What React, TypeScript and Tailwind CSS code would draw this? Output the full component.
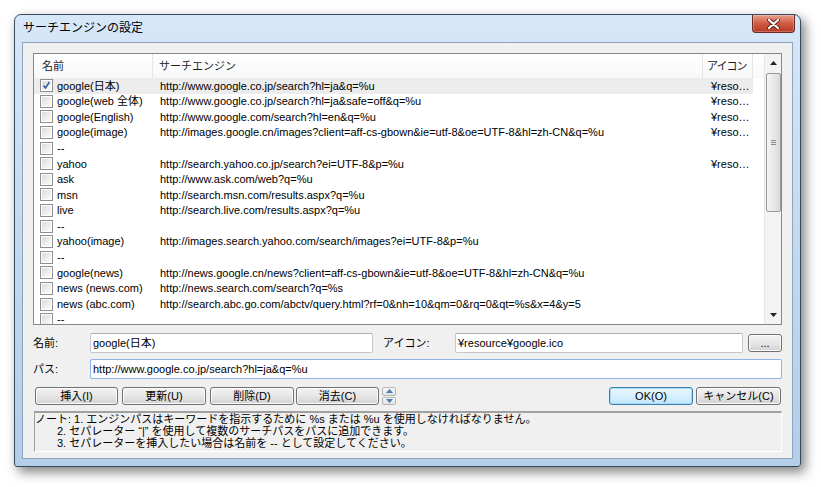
import React from "react";

const rows = [
  { name: "google(日本)", url: "http://www.google.co.jp/search?hl=ja&q=%u", icon: "¥reso…", checked: true },
  { name: "google(web 全体)", url: "http://www.google.co.jp/search?hl=ja&safe=off&q=%u", icon: "¥reso…" },
  { name: "google(English)", url: "http://www.google.com/search?hl=en&q=%u", icon: "¥reso…" },
  { name: "google(image)", url: "http://images.google.cn/images?client=aff-cs-gbown&ie=utf-8&oe=UTF-8&hl=zh-CN&q=%u", icon: "¥reso…" },
  { name: "--", url: "", icon: "" },
  { name: "yahoo", url: "http://search.yahoo.co.jp/search?ei=UTF-8&p=%u", icon: "¥reso…" },
  { name: "ask", url: "http://www.ask.com/web?q=%u", icon: "" },
  { name: "msn", url: "http://search.msn.com/results.aspx?q=%u", icon: "" },
  { name: "live", url: "http://search.live.com/results.aspx?q=%u", icon: "" },
  { name: "--", url: "", icon: "" },
  { name: "yahoo(image)", url: "http://images.search.yahoo.com/search/images?ei=UTF-8&p=%u", icon: "" },
  { name: "--", url: "", icon: "" },
  { name: "google(news)", url: "http://news.google.cn/news?client=aff-cs-gbown&ie=utf-8&oe=UTF-8&hl=zh-CN&q=%u", icon: "" },
  { name: "news (news.com)", url: "http://news.search.com/search?q=%s", icon: "" },
  { name: "news (abc.com)", url: "http://search.abc.go.com/abctv/query.html?rf=0&nh=10&qm=0&rq=0&qt=%s&x=4&y=5", icon: "" },
  { name: "--", url: "", icon: "" },
];

function CheckBox({ checked }: { checked?: boolean }) {
  return (
    <div className="w-[13px] h-[13px] shrink-0 border border-[#8e8f8f] bg-white p-px">
      <div className="relative w-full h-full bg-gradient-to-br from-[#dcdcdc] to-[#fbfbfb]">
        {checked && (
          <svg className="absolute inset-0" width="9" height="9" viewBox="0 0 9 9">
            <path d="M1.5 4.5 L3.5 7 L7.5 1" fill="none" stroke="#3c58a8" strokeWidth="1.6" />
          </svg>
        )}
      </div>
    </div>
  );
}

function Arrow({ up, color = "#222" }: { up?: boolean; color?: string }) {
  return (
    <svg width="7" height="4" viewBox="0 0 7 4">
      <path d={up ? "M0 4 L3.5 0 L7 4 Z" : "M0 0 L3.5 4 L7 0 Z"} fill={color} />
    </svg>
  );
}

function Btn({ children, className = "", primary }: { children: React.ReactNode; className?: string; primary?: boolean }) {
  return (
    <div
      className={`h-[18px] flex items-center justify-center rounded-[3px] border text-[11px] text-black ${
        primary
          ? "border-[#3c7fb1] bg-gradient-to-b from-[#eaf6fd] via-[#d9f0fc] to-[#bee6fd] shadow-[inset_0_0_0_1px_#a7d9f5]"
          : "border-[#707070] bg-gradient-to-b from-[#f2f2f2] via-[#e6e6e6] to-[#d2d2d2] shadow-[inset_0_0_0_1px_#fbfbfb]"
      } ${className}`}
    >
      {children}
    </div>
  );
}

export default function App() {
  return (
    <div className="w-[821px] h-[487px] bg-white pt-[14px] pl-[14px] font-['Liberation_Sans','Noto_Sans_CJK_JP',sans-serif] text-black">
      <div className="relative w-[787px] h-[453px] rounded-t-[7px] rounded-b-[3px] border border-[#3a4a5e] bg-gradient-to-b from-[#d6e7f8] via-[#c2d9f0] to-[#b4cde8] shadow-[4px_5px_12px_rgba(0,0,0,0.5)] flex flex-col px-[7px] pb-[7px]">
        <div className="h-[27px] flex items-center pl-px pb-[2px] text-[12px] text-black">サーチエンジンの設定</div>

        <div className="absolute right-[5px] top-0 w-[43px] h-[18px] rounded-b-[4px] border border-t-0 border-[#6b2a22] bg-gradient-to-b from-[#e6a08e] via-[#cf5a44] to-[#b73a25] flex items-center justify-center shadow-[inset_0_0_0_1px_rgba(255,255,255,0.25)]">
          <svg width="13" height="10" viewBox="0 0 13 10">
            <path d="M2 1 L11 9 M11 1 L2 9" stroke="#5a2016" strokeWidth="4" strokeLinecap="round" />
            <path d="M2 1 L11 9 M11 1 L2 9" stroke="#ffffff" strokeWidth="2.2" strokeLinecap="round" />
          </svg>
        </div>

        <div className="flex-1 bg-[#f0f0f0] border border-[#8fa4bd] px-[10px] pt-[10px] pb-[6px] flex flex-col">
          {/* list view */}
          <div className="h-[272px] border border-[#828790] bg-white flex overflow-hidden">
            <div className="flex-1 flex flex-col overflow-hidden">
              <div className="h-[24px] shrink-0 flex text-[11px] text-[#1e1e1e] bg-gradient-to-b from-white to-[#f7f8fa] whitespace-nowrap">
                <div className="w-[119px] pl-[8px] flex items-center border-r border-[#e3e5e8]">名前</div>
                <div className="w-[550px] pl-[6px] flex items-center border-r border-[#e3e5e8]">サーチエンジン</div>
                <div className="w-[50px] pl-[4px] flex items-center border-r border-[#e3e5e8] tracking-[-1px]">アイコン</div>
              </div>
              {rows.map((r, i) => (
                <div key={i} className={`h-[15.6px] shrink-0 w-[719px] flex items-center text-[11px] whitespace-nowrap ${i === 0 ? "bg-[#ececec]" : ""}`}>
                  <div className="w-[119px] pl-[6px] flex items-center gap-[4px]">
                    <CheckBox checked={r.checked} />
                    <span>{r.name}</span>
                  </div>
                  <div className="w-[550px] pl-[7px] overflow-hidden">{r.url}</div>
                  <div className="w-[50px] pl-[8px]">{r.icon}</div>
                </div>
              ))}
            </div>
            {/* scrollbar */}
            <div className="w-[17px] shrink-0 bg-[#f3f3f3] border-l border-[#e6e6e6] flex flex-col items-center">
              <div className="h-[18px] w-full flex items-center justify-center">
                <Arrow up />
              </div>
              <div className="mt-px w-[15px] h-[139px] rounded-[2px] border border-[#9a9a9a] bg-gradient-to-r from-[#f4f4f4] via-[#e9e9e9] to-[#dadada] flex flex-col items-center justify-center gap-px">
                <div className="w-[5px] h-px bg-[#8a8a8a]" />
                <div className="w-[5px] h-px bg-[#8a8a8a]" />
                <div className="w-[5px] h-px bg-[#8a8a8a]" />
              </div>
              <div className="flex-1" />
              <div className="h-[18px] w-full flex items-center justify-center">
                <Arrow />
              </div>
            </div>
          </div>

          {/* name / icon row */}
          <div className="mt-[8px] h-[20px] flex items-center text-[11px]">
            <div className="w-[57px]">名前:</div>
            <div className="w-[283px] h-[20px] border border-[#c5c9cf] border-t-[#abadb3] rounded-[2px] bg-white flex items-center pl-[2px]">google(日本)</div>
            <div className="w-[72px] ml-[10px]">アイコン:</div>
            <div className="w-[288px] h-[20px] border border-[#c5c9cf] border-t-[#abadb3] rounded-[2px] bg-white flex items-center pl-[2px]">¥resource¥google.ico</div>
            <Btn className="ml-[5px] w-[34px] text-[9px]">...</Btn>
          </div>

          {/* path row */}
          <div className="mt-[6px] h-[20px] flex items-center text-[11px]">
            <div className="w-[57px]">パス:</div>
            <div className="flex-1 h-[20px] border border-[#8db2e3] rounded-[2px] bg-white flex items-center pl-[2px]">http://www.google.co.jp/search?hl=ja&amp;q=%u</div>
          </div>

          {/* buttons row */}
          <div className="mt-[8px] h-[18px] flex items-center">
            <Btn className="ml-[2px] w-[83px]">挿入(I)</Btn>
            <Btn className="ml-[4px] w-[84px]">更新(U)</Btn>
            <Btn className="ml-[4px] w-[84px]">削除(D)</Btn>
            <Btn className="ml-[2px] w-[83px]">消去(C)</Btn>
            <div className="ml-[3px] w-[14px] h-[18px] flex flex-col gap-px">
              <div className="flex-1 border border-[#b5b5b5] rounded-[2px] bg-gradient-to-b from-[#f7f7f7] to-[#e3e3e3] flex items-center justify-center">
                <Arrow up color="#4a7cb5" />
              </div>
              <div className="flex-1 border border-[#b5b5b5] rounded-[2px] bg-gradient-to-b from-[#f7f7f7] to-[#e3e3e3] flex items-center justify-center">
                <Arrow color="#4a7cb5" />
              </div>
            </div>
            <div className="flex-1" />
            <Btn primary className="w-[84px]">OK(O)</Btn>
            <Btn className="ml-[3px] mr-[1px] w-[85px]">キャンセル(C)</Btn>
          </div>

          {/* note */}
          <div className="mt-[6px] ml-px h-[41px] border-t-2 border-l border-[#a0a0a0] border-r border-r-white border-b border-b-white bg-[#f0f0f0] text-[11px] leading-[12px] whitespace-nowrap">
            <div>ノート: 1. エンジンパスはキーワードを指示するために %s または %u を使用しなければなりません。</div>
            <div className="pl-[22px]">2. セパレーター “|” を使用して複数のサーチパスをパスに追加できます。</div>
            <div className="pl-[22px]">3. セパレーターを挿入したい場合は名前を -- として設定してください。</div>
          </div>
        </div>
      </div>
    </div>
  );
}
